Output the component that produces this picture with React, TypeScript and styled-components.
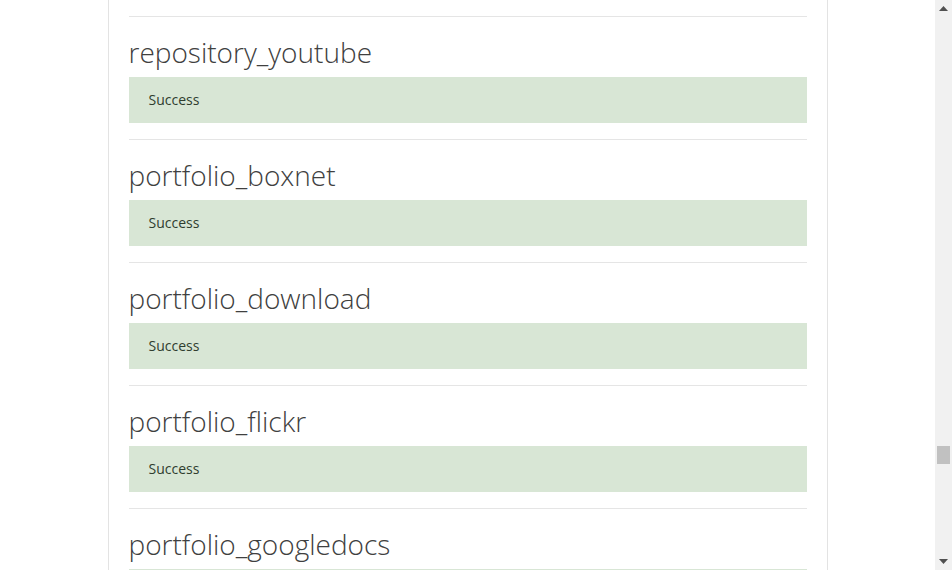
import styled, { createGlobalStyle } from "styled-components";

const GlobalStyle = createGlobalStyle`
	html, body {
		margin: 0;
		padding: 0;
		height: 570px;
		overflow: hidden;
		background: #ffffff;
	}
`;

export const Screen = styled.div`
	display: flex;
	height: 570px;
	width: 952px;
`;

export const Page = styled.div`
	flex: 1;
	overflow: hidden;
`;

export const Panel = styled.div`
	box-sizing: border-box;
	width: 720px;
	height: 570px;
	margin: 0 auto;
	padding: 16px 20px 0;
	border-left: 1px solid #e3e3e3;
	border-right: 1px solid #e3e3e3;
	overflow: hidden;
`;

export const Section = styled.section`
	border-top: 1px solid #e5e5e5;
	padding-bottom: 16px;
`;

export const Title = styled.h2`
	margin: 0;
	height: 60px;
	padding-top: 16px;
	box-sizing: border-box;
	font-family: "Open Sans", "Liberation Sans", sans-serif;
	font-weight: 300;
	font-size: 28px;
	line-height: 38px;
	color: #404040;
	white-space: nowrap;
`;

export const Alert = styled.div<{ tone?: string }>`
	height: 46px;
	padding: 0 20px;
	background: ${(props) => props.tone || "#d8e6d5"};
	font-family: "Open Sans", "Liberation Sans", sans-serif;
	font-size: 14px;
	line-height: 46px;
	color: #2f3d2f;
`;

export const Scrollbar = styled.div`
	width: 17px;
	height: 570px;
	background: #f1f1f1;
	display: flex;
	flex-direction: column;
	align-items: center;
`;

export const Arrow = styled.div<{ down?: boolean }>`
	width: 17px;
	height: 17px;
	display: flex;
	align-items: center;
	justify-content: center;
	${(props) => (props.down ? "margin-top: auto;" : "")}
`;

export const Track = styled.div`
	flex: 0 0 auto;
	width: 17px;
	display: flex;
	justify-content: center;
`;

export const Thumb = styled.div<{ top: number }>`
	width: 13px;
	height: 18px;
	margin-top: ${(props) => props.top}px;
	background: #c1c1c1;
`;

const items = [
	"repository_youtube",
	"portfolio_boxnet",
	"portfolio_download",
	"portfolio_flickr",
	"portfolio_googledocs",
];

function Triangle({ down }: { down?: boolean }) {
	return (
		<svg width="9" height="5" viewBox="0 0 9 5">
			<path d={down ? "M0 0 L9 0 L4.5 5 Z" : "M0 5 L9 5 L4.5 0 Z"} fill="#505050" />
		</svg>
	);
}

export default function App() {
	return (
		<>
			<GlobalStyle />
			<Screen>
				<Page>
					<Panel>
						{items.map((name, i) => (
							<Section key={name}>
								<Title>{name}</Title>
								<Alert>{i < items.length - 1 ? "Success" : ""}</Alert>
							</Section>
						))}
					</Panel>
				</Page>
				<Scrollbar>
					<Arrow>
						<Triangle />
					</Arrow>
					<Track>
						<Thumb top={429} />
					</Track>
					<Arrow down>
						<Triangle down />
					</Arrow>
				</Scrollbar>
			</Screen>
		</>
	);
}
